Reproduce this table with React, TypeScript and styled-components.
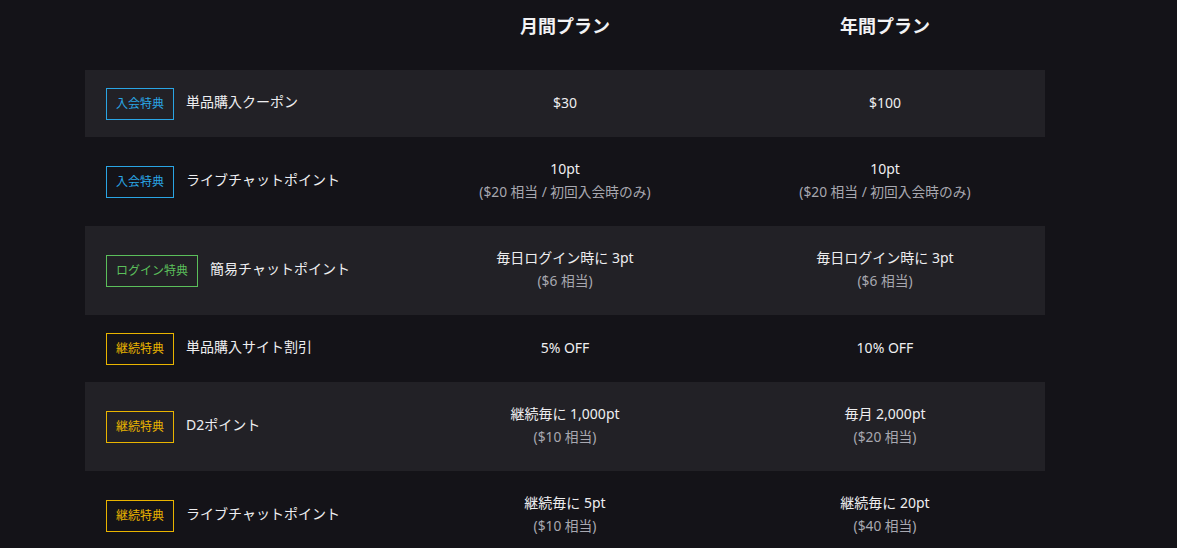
import React from 'react';
import styled, { createGlobalStyle } from 'styled-components';

const GlobalStyle = createGlobalStyle`
  html, body {
    margin: 0;
    padding: 0;
    background: #141318;
  }
  body {
    font-family: "Noto Sans", "Noto Sans CJK JP", sans-serif;
    color: #ececef;
  }
`;

type BadgeKind = 'join' | 'login' | 'continue';

const badgeColors: Record<BadgeKind, string> = {
  join: '#2aa5e4',
  login: '#5bbf5b',
  continue: '#e9b400',
};

const Page = styled.div`
  width: 1177px;
  height: 548px;
  overflow: hidden;
  padding-left: 85px;
  box-sizing: border-box;
`;

const Table = styled.div`
  width: 960px;
  display: flex;
  flex-direction: column;
`;

const HeaderRow = styled.div`
  display: grid;
  grid-template-columns: repeat(3, 320px);
  height: 70px;
  padding-top: 13px;
  box-sizing: border-box;
`;

const HeaderCell = styled.div`
  text-align: center;
  font-size: 18px;
  font-weight: 700;
  line-height: 26px;
  color: #f2f2f4;
`;

const Row = styled.div<{ $shaded: boolean; $tall: boolean }>`
  display: grid;
  grid-template-columns: repeat(3, 320px);
  align-items: center;
  height: ${(p) => (p.$tall ? 89 : 67)}px;
  background: ${(p) => (p.$shaded ? '#222126' : 'transparent')};
`;

const LabelCell = styled.div`
  display: flex;
  align-items: center;
  gap: 12px;
  padding-left: 21px;
`;

const Badge = styled.span<{ $kind: BadgeKind }>`
  display: inline-flex;
  align-items: center;
  height: 32px;
  padding: 0 9px 2px;
  box-sizing: border-box;
  border: 1px solid ${(p) => badgeColors[p.$kind]};
  color: ${(p) => badgeColors[p.$kind]};
  font-size: 12px;
  white-space: nowrap;
`;

const Label = styled.span`
  font-size: 14px;
  line-height: 22px;
  padding-bottom: 3px;
  color: #eeeef0;
`;

const ValueCell = styled.div`
  display: flex;
  flex-direction: column;
  align-items: center;
  text-align: center;
  padding-bottom: 3px;
`;

const Main = styled.span`
  font-size: 14px;
  line-height: 23px;
  color: #eeeef0;
`;

const Sub = styled.span`
  font-size: 13.75px;
  line-height: 23px;
  color: #a8a8b0;
`;

type Value = { main: string; sub?: string };

type Benefit = {
  kind: BadgeKind;
  badge: string;
  label: string;
  monthly: Value;
  yearly: Value;
};

const benefits: Benefit[] = [
  { kind: 'join', badge: '入会特典', label: '単品購入クーポン', monthly: { main: '$30' }, yearly: { main: '$100' } },
  {
    kind: 'join',
    badge: '入会特典',
    label: 'ライブチャットポイント',
    monthly: { main: '10pt', sub: '($20 相当 / 初回入会時のみ)' },
    yearly: { main: '10pt', sub: '($20 相当 / 初回入会時のみ)' },
  },
  {
    kind: 'login',
    badge: 'ログイン特典',
    label: '簡易チャットポイント',
    monthly: { main: '毎日ログイン時に 3pt', sub: '($6 相当)' },
    yearly: { main: '毎日ログイン時に 3pt', sub: '($6 相当)' },
  },
  { kind: 'continue', badge: '継続特典', label: '単品購入サイト割引', monthly: { main: '5% OFF' }, yearly: { main: '10% OFF' } },
  {
    kind: 'continue',
    badge: '継続特典',
    label: 'D2ポイント',
    monthly: { main: '継続毎に 1,000pt', sub: '($10 相当)' },
    yearly: { main: '毎月 2,000pt', sub: '($20 相当)' },
  },
  {
    kind: 'continue',
    badge: '継続特典',
    label: 'ライブチャットポイント',
    monthly: { main: '継続毎に 5pt', sub: '($10 相当)' },
    yearly: { main: '継続毎に 20pt', sub: '($40 相当)' },
  },
];

const ValueView: React.FC<{ value: Value }> = ({ value }) => (
  <ValueCell>
    <Main>{value.main}</Main>
    {value.sub && <Sub>{value.sub}</Sub>}
  </ValueCell>
);

const App: React.FC = () => {
  return (
    <Page>
      <GlobalStyle />
      <Table>
        <HeaderRow>
          <div />
          <HeaderCell>月間プラン</HeaderCell>
          <HeaderCell>年間プラン</HeaderCell>
        </HeaderRow>
        {benefits.map((b, i) => (
          <Row key={i} $shaded={i % 2 === 0} $tall={!!b.monthly.sub}>
            <LabelCell>
              <Badge $kind={b.kind}>{b.badge}</Badge>
              <Label>{b.label}</Label>
            </LabelCell>
            <ValueView value={b.monthly} />
            <ValueView value={b.yearly} />
          </Row>
        ))}
      </Table>
    </Page>
  );
};

export default App;
